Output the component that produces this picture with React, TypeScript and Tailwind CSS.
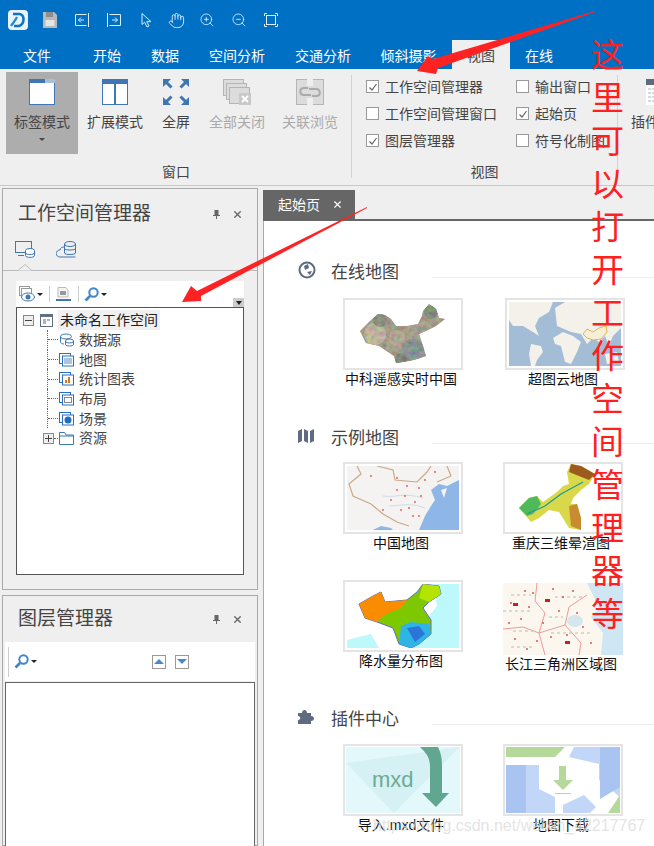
import { Hand, ZoomIn, ZoomOut, X } from "lucide-react"
import type { ReactNode } from "react"

const CHINA = "M13 29 L22 20 L31 12 L38 13 L44 17 L49 24 L60 24 L71 22 L75 14 L76 9 L82 2 L89 7 L92 16 L98 17 L89 24 L79 29 L72 32 L76 44 L79 54 L70 57 L62 59 L49 61 L47 54 L32 44 L19 41 Z"

function Logo() {
  return (
    <svg width="20" height="20" viewBox="0 0 20 20">
      <rect width="20" height="20" rx="4" fill="#e8f3fb" />
      <path d="M5 4 H11 C17 4 17 14 11 16 H6" fill="none" stroke="#1273c4" strokeWidth="2.6" />
      <path d="M3 16 C5 13 7 11 9 7" fill="none" stroke="#1a8ad8" strokeWidth="2.2" />
    </svg>
  )
}

function TitleIcons() {
  const stroke = { fill: "none", stroke: "#dcecf8", strokeWidth: 1 }
  return (
    <div className="flex h-10 items-center pl-2">
      <Logo />
      <svg className="ml-[15px]" width="14" height="16" viewBox="0 0 14 16">
        <path d="M0 0 H11 L14 3 V16 H0 Z" fill="#b9b9b9" />
        <rect x="3" y="0" width="7" height="5" fill="#8d8d8d" />
        <rect x="2.5" y="8" width="9" height="6" fill="#e5e5e5" />
      </svg>
      <svg className="ml-[18px]" width="14" height="14" viewBox="0 0 14 14" {...stroke}>
        <path d="M11.5 1.5 H.5 V12.5 H11.5 M13.5 0 V14 M9 7 H3.5 M6 4.5 L3.5 7 L6 9.5" />
      </svg>
      <svg className="ml-[18px]" width="14" height="14" viewBox="0 0 14 14" {...stroke}>
        <path d="M2.5 1.5 H13.5 V12.5 H2.5 M.5 0 V14 M5 7 H10.5 M8 4.5 L10.5 7 L8 9.5" />
      </svg>
      <svg className="ml-[20px]" width="11" height="15" viewBox="0 0 11 15" {...stroke}>
        <path d="M1 .5 V11.5 L3.7 9.2 L6 14 L8 13 L5.8 8.6 H10 Z" />
      </svg>
      <Hand className="ml-[16px]" size={17} color="#dcecf8" strokeWidth={1.3} />
      <ZoomIn className="ml-[14px]" size={16} color="#dcecf8" strokeWidth={1.3} />
      <ZoomOut className="ml-[16px]" size={16} color="#dcecf8" strokeWidth={1.3} />
      <svg className="ml-[17px]" width="14" height="14" viewBox="0 0 14 14" {...stroke}>
        <path d="M.5 3 V.5 H3 M11 .5 H13.5 V3 M13.5 11 V13.5 H11 M3 13.5 H.5 V11" />
        <rect x="2.5" y="2.5" width="9" height="9" />
      </svg>
    </div>
  )
}

const TABS = [
  { label: "文件", w: "w-[74px]" },
  { label: "开始", w: "w-[66px]" },
  { label: "数据", w: "w-[50px]" },
  { label: "空间分析", w: "w-[94px]" },
  { label: "交通分析", w: "w-[78px]" },
  { label: "倾斜摄影", w: "w-[90px] pl-[3px]" },
]

function TabBar() {
  return (
    <div className="flex h-[29px] text-sm leading-[32px] text-white">
      {TABS.map((t) => (
        <div key={t.label} className={`${t.w} text-center whitespace-nowrap`}>{t.label}</div>
      ))}
      <div className="w-[58px] bg-[#efefef] text-center text-[#444]">视图</div>
      <div className="w-[58px] text-center">在线</div>
    </div>
  )
}

function RibbonButton({ w, icon, label, disabled, active }: { w: string; icon: ReactNode; label: string; disabled?: boolean; active?: boolean }) {
  return (
    <div className={`${w} flex h-[82px] flex-col items-center pt-[7px] ${active ? "bg-[#adadad]" : ""}`}>
      <div className="flex h-[26px] items-center justify-center">{icon}</div>
      <div className={`mt-[7px] h-5 text-sm leading-5 whitespace-nowrap ${disabled ? "text-[#aaa]" : "text-[#444]"}`}>{label}</div>
      {active && <div className="mt-[6px] h-0 w-0 border-x-[3px] border-t-[3px] border-x-transparent border-t-[#444]" />}
    </div>
  )
}

function Check({ on, label }: { on?: boolean; label: string }) {
  return (
    <div className="flex h-[27px] items-center text-sm whitespace-nowrap text-[#444]">
      <div className="mr-[6px] flex h-[13px] w-[13px] items-center justify-center border border-[#999] bg-white">
        {on && (
          <svg width="10" height="10" viewBox="0 0 10 10">
            <path d="M1.5 5.5 L4 8 L8.5 2" fill="none" stroke="#666" strokeWidth="1.2" />
          </svg>
        )}
      </div>
      {label}
    </div>
  )
}

function Ribbon() {
  return (
    <div className="flex h-[116px] bg-[#efefef] text-[#444]">
      <div className="flex w-[351px] shrink-0 flex-col pl-[6px] pt-[3px]">
        <div className="flex">
          <RibbonButton
            w="w-[72px]"
            active
            label="标签模式"
            icon={
              <svg width="26" height="26" viewBox="0 0 26 26">
                <rect x=".5" y=".5" width="25" height="25" fill="#fff" stroke="#3f76b3" />
                <rect width="16" height="4" fill="#3f76b3" />
                <rect x="16" width="10" height="4" fill="#a9bfd8" />
              </svg>
            }
          />
          <RibbonButton
            w="w-[74px]"
            label="扩展模式"
            icon={
              <svg width="26" height="26" viewBox="0 0 26 26">
                <rect x=".5" y=".5" width="25" height="25" fill="#fff" stroke="#3f76b3" />
                <rect width="26" height="5" fill="#3f76b3" />
                <rect x="12" width="2" height="26" fill="#3f76b3" />
              </svg>
            }
          />
          <RibbonButton
            w="w-[48px]"
            label="全屏"
            icon={
              <svg width="26" height="26" viewBox="0 0 26 26" fill="#3f76b3" stroke="none">
                <path d="M0 0 H8 L0 8 Z M26 0 V8 L18 0 Z M0 26 V18 L8 26 Z M26 26 H18 L26 18 Z" />
                <path d="M3 3 L8.5 8.5 M23 3 L17.5 8.5 M3 23 L8.5 17.5 M23 23 L17.5 17.5" stroke="#3f76b3" strokeWidth="3" />
              </svg>
            }
          />
          <RibbonButton
            w="w-[74px]"
            disabled
            label="全部关闭"
            icon={
              <svg width="28" height="26" viewBox="0 0 28 26">
                <rect x=".5" y=".5" width="20" height="16" fill="#dcdcdc" stroke="#b5b5b5" />
                <rect x="3.5" y="4.5" width="20" height="16" fill="#dcdcdc" stroke="#b5b5b5" />
                <rect x="6.5" y="8.5" width="20" height="16" fill="#dcdcdc" stroke="#b5b5b5" />
                <rect x="16" y="14" width="12" height="12" fill="#c9c9c9" />
                <path d="M19 17 L25 23 M25 17 L19 23" stroke="#fff" strokeWidth="2" />
              </svg>
            }
          />
          <RibbonButton
            w="w-[72px]"
            disabled
            label="关联浏览"
            icon={
              <svg width="28" height="26" viewBox="0 0 28 26">
                <rect x=".5" y=".5" width="27" height="25" fill="#dcdcdc" stroke="#b5b5b5" />
                <rect x="11" y="0" width="6" height="7" fill="#efefef" />
                <rect x="11" y="19" width="6" height="7" fill="#efefef" />
                <path d="M12 9 H8 C3 9 3 16 8 16 H15 M16 17 H20 C25 17 25 10 20 10 H13" fill="none" stroke="#aaa" strokeWidth="2" />
              </svg>
            }
          />
        </div>
        <div className="mt-[8px] w-[340px] text-center text-sm leading-5">窗口</div>
      </div>
      <div className="mt-[6px] h-[103px] w-px shrink-0 bg-[#d2d2d2]" />
      <div className="flex w-[265px] shrink-0 flex-col pt-[4px]">
        <div className="flex pl-[14px]">
          <div className="w-[150px]">
            <Check on label="工作空间管理器" />
            <Check label="工作空间管理窗口" />
            <Check on label="图层管理器" />
          </div>
          <div>
            <Check label="输出窗口" />
            <Check on label="起始页" />
            <Check label="符号化制图" />
          </div>
        </div>
        <div className="mt-[8px] w-[265px] text-center text-sm leading-5">视图</div>
      </div>
      <div className="mt-[6px] h-[103px] w-px shrink-0 bg-[#d2d2d2]" />
      <div className="flex shrink-0 flex-col items-start pl-[13px] pt-[10px]">
        <svg className="ml-[15px]" width="24" height="26" viewBox="0 0 24 26">
          <rect width="24" height="26" fill="#fff" />
          <rect width="24" height="6" fill="#5c6b80" />
          <path d="M2 10 H24 M2 14 H24 M2 18 H24 M2 22 H24" stroke="#a9b4c4" strokeDasharray="3 1" />
        </svg>
        <div className="mt-[7px] text-sm leading-5 whitespace-nowrap">插件</div>
      </div>
    </div>
  )
}

function PanelHeader({ title, h }: { title: string; h: string }) {
  return (
    <div className={`${h} flex items-center pl-[15px] pr-[14px] text-[#444]`}>
      <div className="flex-1 text-[19px] leading-6 whitespace-nowrap">{title}</div>
      <svg className="mr-[12px]" width="7" height="9" viewBox="0 0 7 9">
        <path d="M1.5 0 H5.5 V5 H7 V6 H4 V9 H3 V6 H0 V5 H1.5 Z" fill="#666" />
      </svg>
      <X size={11} color="#666" strokeWidth={3} />
    </div>
  )
}

function Magnifier({ className }: { className: string }) {
  return (
    <svg className={className} width="15" height="15" viewBox="0 0 15 15" fill="none" stroke="#3f86c9">
      <circle cx="9.5" cy="5.5" r="4.2" strokeWidth="2" />
      <path d="M6 9 L1.5 13.5" strokeWidth="2.6" />
    </svg>
  )
}

function FileIcon({ kind }: { kind: string }) {
  if (kind === "ds") {
    return (
      <svg width="15" height="14" viewBox="0 0 15 14" fill="none" stroke="#3f76b3">
        <ellipse cx="7" cy="3.5" rx="5.5" ry="2.5" />
        <path d="M1.5 3.5 V9 C1.5 10 3 11 5 11" />
        <ellipse cx="10.5" cy="8" rx="4" ry="2" />
        <path d="M6.5 8 V11.5 C6.5 13.5 14.5 13.5 14.5 11.5 V8" />
      </svg>
    )
  }
  if (kind === "folder") {
    return (
      <svg width="15" height="13" viewBox="0 0 15 13" fill="none" stroke="#3f76b3">
        <path d="M.5 12.5 V.5 H5.5 L7 3 H14.5 V12.5 Z M.5 4 H14.5" />
      </svg>
    )
  }
  const inner: Record<string, ReactNode> = {
    map: <rect x="5" y="5" width="8" height="6" fill="#a9c4e4" />,
    chart: <path d="M6 11 V8 H8 V11 Z M9 11 V5 H11 V11 Z" fill="#d2782a" />,
    layout: <rect x="5.5" y="5.5" width="7" height="5" fill="#fff" stroke="#888" />,
    scene: <circle cx="9" cy="8" r="3.5" fill="#1d6fc0" />,
  }
  return (
    <svg width="15" height="14" viewBox="0 0 15 14" fill="none">
      <rect x=".5" y=".5" width="11" height="10" stroke="#2a6fc0" />
      <rect x="3.5" y="3" width="11" height="10" fill="#fff" stroke="#2a6fc0" />
      {inner[kind]}
    </svg>
  )
}

const TREE = [
  { kind: "ds", label: "数据源" },
  { kind: "map", label: "地图" },
  { kind: "chart", label: "统计图表" },
  { kind: "layout", label: "布局" },
  { kind: "scene", label: "场景" },
]

function Tree() {
  return (
    <div className="ml-[13px] h-[268px] w-[228px] border border-[#555] bg-white pt-[2px] text-sm text-[#444]">
      <div className="flex h-[20px] items-center pl-[6px]">
        <div className="flex h-[11px] w-[11px] items-center justify-center border border-[#888] bg-[#eee]">
          <div className="h-px w-[7px] bg-[#444]" />
        </div>
        <svg className="ml-[6px]" width="13" height="13" viewBox="0 0 13 13">
          <rect x=".5" y=".5" width="12" height="12" fill="#fff" stroke="#5f7187" />
          <rect width="13" height="3" fill="#5f7187" />
          <rect x="3" y="5" width="3" height="5" fill="#aab5c4" />
          <rect x="7" y="5" width="3" height="2" fill="#aab5c4" />
        </svg>
        <div className="ml-[5px] bg-[#f0f0f0] px-[2px] leading-5 whitespace-nowrap text-[#222]">未命名工作空间</div>
      </div>
      {TREE.map((r) => (
        <div key={r.label} className="flex h-[19.7px] items-center pl-[30px]">
          <div className="h-full border-l border-dotted border-[#666]" />
          <div className="mr-px w-[10px] border-t border-dotted border-[#666]" />
          <FileIcon kind={r.kind} />
          <div className="ml-[5px] whitespace-nowrap">{r.label}</div>
        </div>
      ))}
      <div className="flex h-[19.7px] items-center pl-[26px]">
        <div className="relative h-[11px] w-[11px] border border-[#888] bg-[#eee]">
          <div className="absolute left-px top-[4px] h-px w-[7px] bg-[#444]" />
          <div className="absolute left-[4px] top-px h-[7px] w-px bg-[#444]" />
        </div>
        <div className="mr-px w-[4px] border-t border-dotted border-[#666]" />
        <FileIcon kind="folder" />
        <div className="ml-[5px] whitespace-nowrap">资源</div>
      </div>
    </div>
  )
}

function WorkspacePanel() {
  return (
    <div className="h-[402px] shrink-0 border border-[#aaa] bg-[#efefef]">
      <PanelHeader title="工作空间管理器" h="h-[50px]" />
      <div className="relative flex h-[32px] items-start gap-[21px] border-b border-[#bbb] pl-3 pt-[2px]">
        <svg width="20" height="17" viewBox="0 0 20 17" fill="none" stroke="#3f76b3">
          <rect x=".5" y=".5" width="16" height="11" />
          <path d="M3 14.5 H9" />
          <ellipse cx="15" cy="9.5" rx="4.5" ry="2" fill="#fff" />
          <path d="M10.5 9.5 V14.5 C10.5 17 19.5 17 19.5 14.5 V9.5 M10.5 12 C10.5 14 19.5 14 19.5 12" fill="#fff" />
        </svg>
        <svg width="20" height="17" viewBox="0 0 20 17" fill="none" stroke="#3f76b3">
          <path d="M8 16 H4 C-1 16 -1 9 4 9 C4 7 6 6 8 6" />
          <path d="M8 16 H19.5" />
          <ellipse cx="14" cy="3" rx="5.5" ry="2.5" />
          <path d="M8.5 3 V12 C8.5 14 19.5 14 19.5 12 V3 M8.5 7.5 C8.5 9.5 19.5 9.5 19.5 7.5" />
        </svg>
        <svg className="absolute bottom-[-1px] left-[15px]" width="14" height="7" viewBox="0 0 14 7">
          <path d="M0 6.5 L7 .5 L14 6.5" fill="#efefef" stroke="#bbb" />
        </svg>
      </div>
      <div className="ml-[13px] mt-[10px] flex h-[26px] w-[228px] items-center bg-white pl-[3px]">
        <svg width="16" height="16" viewBox="0 0 16 16" fill="none">
          <rect x=".5" y=".5" width="10" height="9" stroke="#999" />
          <rect x="2.5" y="2.5" width="10" height="9" fill="#fff" stroke="#999" />
          <ellipse cx="9" cy="11" rx="6.5" ry="4" fill="#fff" stroke="#3f76b3" />
          <circle cx="9" cy="11" r="2.5" fill="#3f76b3" />
        </svg>
        <div className="ml-[2px] h-0 w-0 border-x-[3px] border-t-[3px] border-x-transparent border-t-[#222]" />
        <div className="ml-[6px] h-4 w-px bg-[#ccc]" />
        <svg className="ml-[6px]" width="15" height="14" viewBox="0 0 15 14" fill="none">
          <path d="M2 0.5 H10 L12 3 V10 H2 Z" fill="#f4f4f4" stroke="#bbb" />
          <rect x="4" y="4" width="6" height="4" fill="#999" />
          <rect y="12" width="15" height="2" fill="#3f76b3" />
        </svg>
        <div className="ml-[7px] h-4 w-px bg-[#ccc]" />
        <Magnifier className="ml-[5px]" />
        <div className="ml-[2px] h-0 w-0 border-x-[3px] border-t-[3px] border-x-transparent border-t-[#222]" />
        <div className="ml-auto flex h-[9px] w-[11px] items-center justify-center self-end bg-[#ccc]">
          <div className="h-0 w-0 border-x-[3px] border-t-[4px] border-x-transparent border-t-[#222]" />
        </div>
      </div>
      <Tree />
    </div>
  )
}

function LayerPanel() {
  return (
    <div className="min-h-0 flex-1 border border-[#aaa] bg-[#efefef]">
      <PanelHeader title="图层管理器" h="h-[46px]" />
      <div className="mx-[2px] flex h-[39px] items-center bg-white pl-[3px]">
        <div className="h-[30px] w-px bg-[#ccc]" />
        <Magnifier className="ml-[5px]" />
        <div className="ml-[2px] h-0 w-0 border-x-[3px] border-t-[3px] border-x-transparent border-t-[#222]" />
        <div className="ml-[115px] flex h-[14px] w-[14px] items-center justify-center border border-[#999]">
          <div className="h-0 w-0 border-x-[5px] border-b-[5px] border-x-transparent border-b-[#4a8ac8]" />
        </div>
        <div className="ml-[9px] flex h-[14px] w-[14px] items-center justify-center border border-[#999]">
          <div className="h-0 w-0 border-x-[5px] border-t-[5px] border-x-transparent border-t-[#4a8ac8]" />
        </div>
      </div>
      <div className="mx-[2px] mt-px h-[200px] border border-[#666] bg-white" />
    </div>
  )
}

function SatelliteThumb() {
  return (
    <svg className="block" viewBox="0 0 112 64" width="112" height="64">
      <defs>
        <clipPath id="china-sat"><path d={CHINA} /></clipPath>
        <filter id="sat-noise" x="0" y="0" width="100%" height="100%">
          <feTurbulence type="fractalNoise" baseFrequency=".2" numOctaves="3" seed="4" />
          <feColorMatrix values="1.1 0 0 0 0  0 1 0 0 .02  0 0 .9 0 0  0 0 0 0 1" />
        </filter>
      </defs>
      <g clipPath="url(#china-sat)">
        <rect width="112" height="64" fill="#8b8069" />
        <circle cx="28" cy="32" r="11" fill="#b8a98f" />
        <circle cx="33" cy="18" r="7" fill="#566650" />
        <circle cx="50" cy="36" r="8" fill="#a39078" />
        <circle cx="66" cy="32" r="7" fill="#8a8670" />
        <circle cx="66" cy="48" r="11" fill="#54707a" />
        <circle cx="54" cy="57" r="6" fill="#4c5a4e" />
        <circle cx="84" cy="10" r="7" fill="#4c6a4e" />
        <rect width="112" height="64" filter="url(#sat-noise)" opacity=".45" />
      </g>
    </svg>
  )
}

function WorldThumb() {
  return (
    <svg className="block" viewBox="0 0 112 64" width="112" height="64">
      <rect width="112" height="64" fill="#a3bdd6" />
      <path d="M0 0 H44 L40 10 L30 16 L26 24 L30 34 L24 30 L14 24 L4 24 L0 18 Z" fill="#f3f1ea" />
      <path d="M22 42 L32 44 L34 50 L28 58 L26 64 L22 64 L20 52 Z" fill="#f3f1ea" />
      <path d="M46 6 L56 0 H112 V26 L104 34 L100 44 L96 34 L90 40 L84 36 L78 42 L72 32 L62 30 L48 24 Z" fill="#f3f1ea" />
      <path d="M44 36 L54 30 L64 34 L72 40 L68 50 L62 62 L56 60 L52 44 L46 42 Z" fill="#f3f1ea" />
      <path d="M96 52 L108 50 L110 60 L98 62 Z" fill="#f3f1ea" />
      <path d="M74 32 L78 27 L84 30 L90 26 L97 24 L98 30 L92 37 L84 38 L78 36 Z" fill="#f6efd8" stroke="#dca52a" strokeWidth=".8" />
    </svg>
  )
}

function ChinaMapThumb() {
  const cities = [[24, 10], [50, 12], [60, 20], [72, 22], [58, 30], [68, 36], [54, 44], [36, 44], [66, 50], [78, 14], [88, 6], [50, 24], [62, 42], [74, 30], [44, 34], [72, 50]]
  return (
    <svg className="block" viewBox="0 0 112 64" width="112" height="64">
      <rect width="112" height="64" fill="#f4f3f2" />
      <path d="M112 14 L100 20 L92 18 L84 24 L88 34 L84 40 L78 50 L72 64 H112 Z" fill="#8eb6e6" />
      <path d="M26 64 L34 60 L44 62 L46 64 Z" fill="#8eb6e6" />
      <path d="M94 24 L100 22 L97 32 Z" fill="#f4f3f2" />
      <path d="M10 0 L14 8 L2 18 L6 30 L24 38 L36 48 L50 56 L62 60 M30 0 L46 4 L48 14 L70 16 L80 6 L84 0 M100 0 L104 10 L90 16" fill="none" stroke="#c9aa88" strokeWidth="1.2" />
      <path d="M36 30 C50 32 56 26 76 32 M42 40 C54 40 62 36 78 42" fill="none" stroke="#cfdbe8" />
      {cities.map(([x, y]) => (
        <circle key={`${x}-${y}`} cx={x} cy={y} r=".9" fill="#d55" />
      ))}
    </svg>
  )
}

function ChongqingThumb() {
  return (
    <svg className="block" viewBox="0 0 116 68" width="116" height="68">
      <path d="M14 44 L24 34 L32 32 L38 38 L52 28 L58 22 L64 20 L62 8 L66 0 L76 2 L90 10 L84 20 L76 26 L68 34 L66 40 L72 40 L76 54 L76 66 L64 64 L54 48 L44 46 L34 54 L26 58 Z" fill="#d8d84a" />
      <path d="M14 44 L24 34 L32 32 L36 40 L28 50 L22 52 Z" fill="#4fba5c" />
      <path d="M66 0 L76 2 L90 10 L84 16 L74 12 L64 8 Z" fill="#9c5a1e" />
      <path d="M64 42 L72 40 L76 54 L76 66 L66 62 Z" fill="#c98b30" />
      <path d="M22 50 L40 42 L56 30 L78 18" fill="none" stroke="#1a9a9a" strokeWidth="1.2" />
    </svg>
  )
}

function RainThumb() {
  return (
    <svg className="block" viewBox="0 0 112 64" width="112" height="64">
      <rect width="112" height="64" fill="#fff" />
      <path d="M86 0 H112 V64 H62 L76 40 L90 22 Z" fill="#bdf8fb" />
      <path d="M0 56 L24 50 L32 64 H0 Z" fill="#bdf8fb" />
      <path d="M12 20 L26 12 L34 8 L38 18 L60 16 L70 8 L76 0 L92 2 L94 10 L82 18 L76 24 L84 36 L84 50 L72 60 L64 64 L52 60 L46 44 L30 38 L18 34 Z" fill="#7ec800" stroke="#5c6ad0" />
      <path d="M12 20 L26 12 L34 8 L38 18 L60 16 L54 24 L44 28 L36 32 L30 38 L18 34 Z" fill="#fb8c00" />
      <path d="M76 0 L92 2 L94 10 L82 18 L72 14 Z" fill="#b4e400" />
      <path d="M54 42 L64 38 L82 40 L84 50 L72 60 L64 64 L52 60 Z" fill="#2fb4e6" />
      <path d="M60 44 L72 42 L78 50 L68 58 Z" fill="#2b74d8" />
    </svg>
  )
}

function DeltaThumb() {
  const towns = [[8, 20], [30, 10], [44, 18], [18, 36], [40, 40], [64, 52], [88, 60], [12, 56], [56, 28], [34, 58], [74, 30], [50, 6], [22, 8], [70, 8], [26, 24], [60, 14], [48, 54], [80, 44], [6, 40], [24, 66]]
  return (
    <svg className="block" viewBox="0 0 120 72" width="120" height="72">
      <rect width="120" height="72" fill="#fbf7ee" />
      <path d="M84 0 H120 V72 H98 L100 50 L88 34 L96 26 L90 12 Z" fill="#cfe6f4" />
      <ellipse cx="72" cy="38" rx="8" ry="6" fill="#d6e6ee" />
      <path d="M34 0 L32 18 L42 30 L36 50 L42 72 M0 46 L20 44 L36 50 L62 42 L78 60 L76 72 M62 42 L66 24 L84 12" fill="none" stroke="#ef9a9a" strokeWidth="1" />
      <path d="M0 28 H30 M48 50 H90 M52 14 H82 M8 64 H30 M8 12 H28 M46 34 H60 M10 48 H30" stroke="#bbb" strokeDasharray="3 3" />
      {towns.map(([x, y]) => (
        <circle key={`${x}-${y}`} cx={x} cy={y} r="1" fill="#e05555" />
      ))}
      <rect x="10" y="20" width="5" height="3" fill="#c82020" />
      <rect x="42" y="16" width="5" height="3" fill="#c82020" />
      <rect x="62" y="58" width="5" height="3" fill="#c82020" />
    </svg>
  )
}

function MxdThumb() {
  return (
    <svg className="block" viewBox="0 0 114 66" width="114" height="66">
      <rect width="114" height="66" fill="#e3f8fa" />
      <path d="M0 16 L114 0 L48 66 Z" fill="#d6f1f4" />
      <path d="M74 0 H92 C96 8 96 14 96 22 V46 H103 L90 60 L76 46 H84 V20 C84 10 80 6 74 0 Z" fill="#60a690" />
      <text x="26" y="40" fontSize="22" fill="#6cab95" fontFamily="Liberation Sans">mxd</text>
    </svg>
  )
}

function DownloadThumb() {
  return (
    <svg className="block" viewBox="0 0 114 66" width="114" height="66">
      <rect width="114" height="66" fill="#fff" />
      <path d="M0 0 H59 L49 10 H0 Z" fill="#b5d89b" />
      <path d="M0 18 H33 V42 L49 50 V66 H0 Z" fill="#c2d6f7" />
      <rect width="20" height="48" y="18" fill="#a9c4f0" />
      <path d="M68 0 H114 V50 L93 33 V17 L63 10 Z" fill="#c2d6f7" />
      <path d="M94 0 H114 V40 L94 52 Z" fill="#a9c4f0" />
      <path d="M57 66 V58 L78 48 L90 60 L84 66 Z" fill="#c2d6f7" />
      <path d="M114 48 V66 H102 Z" fill="#b5d89b" />
      <path d="M53 19 H60 V33 H67 L57 43 L47 33 H53 Z" fill="#b5d89b" />
      <rect x="49" y="46" width="16" height="1" fill="#b5d89b" />
    </svg>
  )
}

function Thumb({ caption, children, bare }: { caption: string; children: ReactNode; bare?: boolean }) {
  return (
    <div className="flex w-[120px] flex-col items-center">
      <div className={`flex h-[72px] w-[120px] items-center justify-center overflow-hidden ${bare ? "" : "border-2 border-[#e4e4e4]"}`}>
        {children}
      </div>
      <div className="h-[18px] pr-[4px] text-sm leading-[18px] whitespace-nowrap text-[#111]">{caption}</div>
    </div>
  )
}

function SectionHead({ icon, title, mt }: { icon: ReactNode; title: string; mt: string }) {
  return (
    <div className={`${mt} flex h-6 items-center pl-[34px]`}>
      <div className="flex w-[33px] items-center pb-[4px]">{icon}</div>
      <div className="translate-y-[1px] text-[17px] leading-6 whitespace-nowrap text-[#444]">{title}</div>
      <div className="ml-[33px] mt-[10px] h-px flex-1 bg-[#eee]" />
    </div>
  )
}

function StartPage() {
  return (
    <div className="flex-1 overflow-hidden border-l border-[#aaa] bg-white">
      <SectionHead
        mt="mt-[39px]"
        title="在线地图"
        icon={
          <svg width="18" height="18" viewBox="0 0 18 18">
            <circle cx="9" cy="9" r="7.5" fill="none" stroke="#5f6b80" strokeWidth="2" />
            <path d="M6 5 L10 3 L11 7 L7 9 Z M9 11 L14 10 L12 14 Z" fill="#5f6b80" />
          </svg>
        }
      />
      <div className="ml-[79px] mt-[14px] flex gap-[42px]">
        <Thumb caption="中科遥感实时中国"><SatelliteThumb /></Thumb>
        <Thumb caption="超图云地图"><WorldThumb /></Thumb>
      </div>
      <SectionHead
        mt="mt-[38px]"
        title="示例地图"
        icon={
          <svg width="16" height="14" viewBox="0 0 16 14" fill="#5f6b80">
            <path d="M0 2 L4 0 V12 L0 14 Z M6 0 L10 2 V14 L6 12 Z M12 2 L16 0 V12 L12 14 Z" />
          </svg>
        }
      />
      <div className="ml-[79px] mt-[12px] flex gap-[40px]">
        <Thumb caption="中国地图"><ChinaMapThumb /></Thumb>
        <Thumb caption="重庆三维晕渲图"><ChongqingThumb /></Thumb>
      </div>
      <div className="ml-[79px] mt-[28px] flex gap-[40px]">
        <Thumb caption="降水量分布图"><RainThumb /></Thumb>
        <div className="mt-[3px]">
          <Thumb bare caption="长江三角洲区域图"><DeltaThumb /></Thumb>
        </div>
      </div>
      <SectionHead
        mt="mt-[34px]"
        title="插件中心"
        icon={
          <svg width="16" height="16" viewBox="0 0 16 16" fill="#5f6b80">
            <path d="M0 4 H4 C4 0 9 0 9 4 H13 V7 C17 7 17 12 13 12 V15 H0 V11 C3 11 3 7 0 7 Z" />
          </svg>
        }
      />
      <div className="ml-[79px] mt-[13px] flex gap-[40px]">
        <Thumb caption="导入.mxd文件"><MxdThumb /></Thumb>
        <Thumb caption="地图下载"><DownloadThumb /></Thumb>
      </div>
    </div>
  )
}

function Annotations() {
  const chars = "这里可以打开工作空间管理器等".split("")
  return (
    <>
      <svg className="pointer-events-none absolute inset-0" width="654" height="846" viewBox="0 0 654 846">
        <path d="M417 71 L428 56 L433 59 L595 11 L595 12 L438 68 L436 74 Z" fill="#ff2222" />
        <path d="M182 302 L191 286 L197 291 L367 207 L367 208 L201 296 L201 301 Z" fill="#ff2222" />
      </svg>
      <div className="pointer-events-none absolute left-[590px] top-[34px] w-[35px] text-center text-[33px] leading-[43px] text-[#ff1f1f]">
        {chars.map((c, i) => (
          <div key={i}>{c}</div>
        ))}
      </div>
      <div className="pointer-events-none absolute left-[373px] top-[816px] text-base leading-5 whitespace-nowrap text-[#dcdcdc]/80">
        https://blog.csdn.net/weixin_42217767
      </div>
    </>
  )
}

export default function App() {
  return (
    <div className="relative flex h-[846px] w-[654px] flex-col overflow-hidden bg-[#efefef] [font-family:'Liberation_Sans','Noto_Sans_CJK_SC',sans-serif]">
      <div className="shrink-0 bg-[#0070c4]">
        <TitleIcons />
        <TabBar />
      </div>
      <div className="shrink-0">
        <Ribbon />
      </div>
      <div className="flex min-h-0 flex-1 border-t border-[#c8c8c8]">
        <div className="flex w-[263px] shrink-0 flex-col gap-[5px] pl-[2px] pr-[5px] pt-[2px]">
          <WorkspacePanel />
          <LayerPanel />
        </div>
        <div className="flex min-w-0 flex-1 flex-col pt-[4px]">
          <div className="flex h-[31px] shrink-0 border-b-2 border-[#666]">
            <div className="flex w-[92px] items-center bg-[#666] pl-[15px] text-sm text-white">
              起始页
              <X className="ml-[12px]" size={11} color="#fff" strokeWidth={2.5} />
            </div>
          </div>
          <StartPage />
        </div>
      </div>
      <Annotations />
    </div>
  )
}
